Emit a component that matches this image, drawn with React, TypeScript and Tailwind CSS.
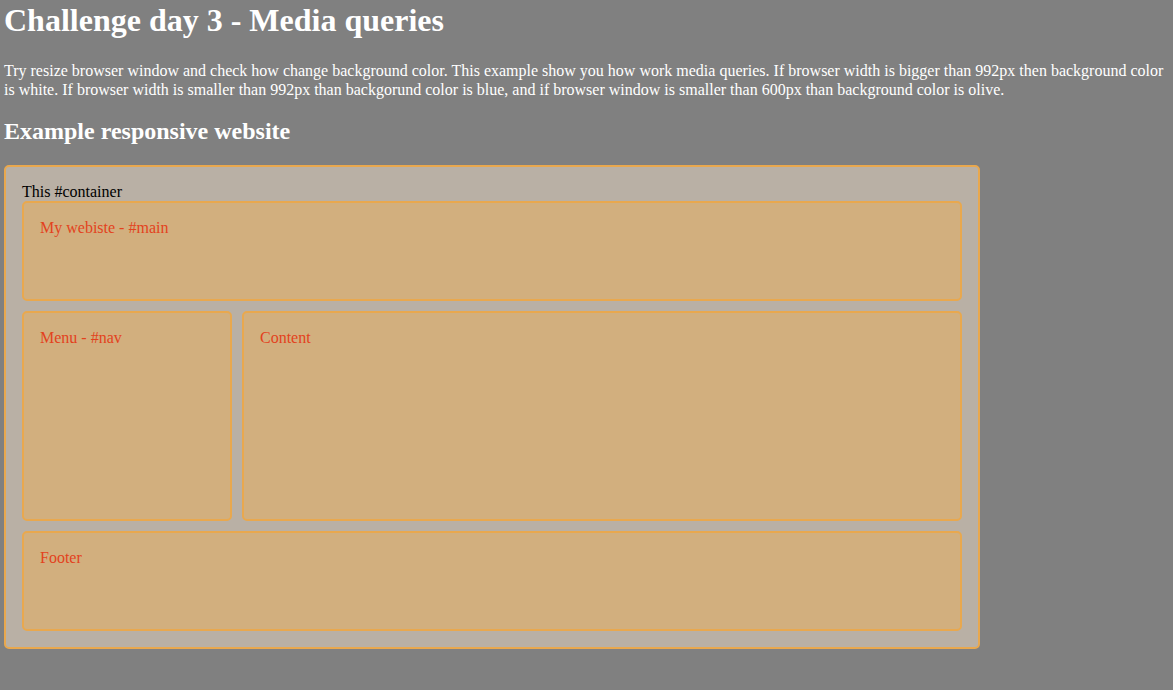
import React from 'react';

const boxClass = 'rounded-[5px] border-2 border-[#e9a84e] bg-[#d2af7e] p-4 text-[#e3421d]';

const App: React.FC = () => {
  return (
    <div className="min-h-[690px] bg-[#808080] px-1 pt-[2px] text-white font-['Liberation_Serif',serif] text-base leading-[1.15]">
      <h1 className="mb-[22px] text-[32px] font-bold leading-[37px]">Challenge day 3 - Media queries</h1>
      <p className="mb-[18px] leading-[19px]">
        Try resize browser window and check how change background color. This example show you how work media queries. If browser width is bigger than 992px then background color is white. If browser width is smaller than 992px than backgorund color is blue, and if browser window is smaller than 600px than background color is olive.
      </p>
      <h2 className="mb-5 text-2xl font-bold leading-[28px]">Example responsive website</h2>

      {/* #container */}
      <div className="w-[976px] rounded-[5px] border-2 border-[#e9a84e] bg-[#b9b0a5] p-4 text-black">
        <div className="leading-[18px]">This #container</div>
        <div className={`${boxClass} h-[100px]`}>My webiste - #main</div>
        <div className="mt-[10px] flex gap-[10px]">
          <div className={`${boxClass} h-[210px] w-[210px]`}>Menu - #nav</div>
          <div className={`${boxClass} h-[210px] flex-1`}>Content</div>
        </div>
        <div className={`${boxClass} mt-[10px] h-[100px]`}>Footer</div>
      </div>
    </div>
  );
};

export default App;
